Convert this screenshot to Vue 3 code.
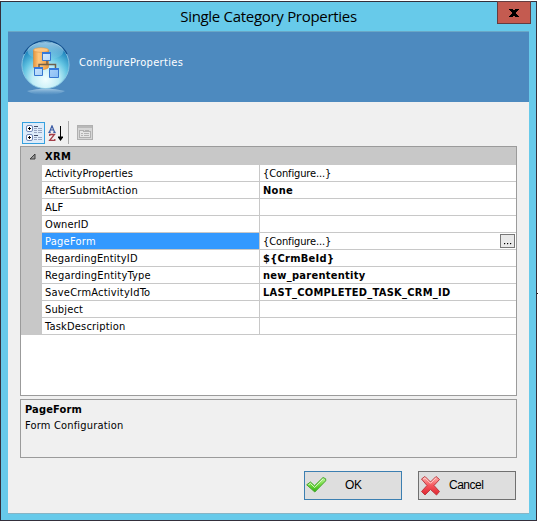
<script setup>
const rows = [
  { name: 'ActivityProperties', value: '{Configure...}', tracking: 0.05 },
  { name: 'AfterSubmitAction', value: 'None', bold: true, tracking: 0.18 },
  { name: 'ALF', value: '', tracking: 0.1 },
  { name: 'OwnerID', value: '', tracking: 0.1 },
  { name: 'PageForm', value: '{Configure...}', selected: true, tracking: 0.25 },
  { name: 'RegardingEntityID', value: '${CrmBeId}', bold: true, tracking: 0.18 },
  { name: 'RegardingEntityType', value: 'new_parententity', bold: true, tracking: 0.22 },
  { name: 'SaveCrmActivityIdTo', value: 'LAST_COMPLETED_TASK_CRM_ID', bold: true, tracking: 0.22 },
  { name: 'Subject', value: '', tracking: 0.15 },
  { name: 'TaskDescription', value: '', tracking: 0.2 }
]
</script>

<template>
  <div class="desktop">
    <div class="window">
      <div class="titlebar">
        <span class="title">Single Category Properties</span>
        <button class="close" aria-label="Close">
          <svg width="10" height="8" viewBox="0 0 10 8" shape-rendering="crispEdges">
            <path d="M0 0h4v1h2V0h4v1H9v1H8v1H7v2h1v1h1v1h1v1H6V7H4v1H0V7h1V6h1V5h1V3H2V2H1V1H0z" fill="#000" />
          </svg>
        </button>
      </div>
      <div class="client">
        <header class="banner">
          <svg class="orb" width="52" height="58" viewBox="0 0 52 58">
            <defs>
              <radialGradient id="ball" cx="50%" cy="80%" r="80%">
                <stop offset="0" stop-color="#f2feff" />
                <stop offset=".35" stop-color="#c0edf6" />
                <stop offset=".6" stop-color="#62c4e2" />
                <stop offset=".85" stop-color="#2389c0" />
                <stop offset="1" stop-color="#125b9b" />
              </radialGradient>
              <linearGradient id="gloss" x2="0" y2="1">
                <stop offset="0" stop-color="#b9def3" stop-opacity=".8" />
                <stop offset="1" stop-color="#8fd1ee" stop-opacity=".15" />
              </linearGradient>
              <linearGradient id="drum">
                <stop offset="0" stop-color="#e8953c" />
                <stop offset=".35" stop-color="#ffc980" />
                <stop offset="1" stop-color="#ed983d" />
              </linearGradient>
              <linearGradient id="pane" x2="1" y2="1">
                <stop offset="0" stop-color="#e4f3ff" />
                <stop offset="1" stop-color="#87bdf5" />
              </linearGradient>
              <linearGradient id="shine" x2="0" y2="1">
                <stop offset="0" stop-color="#c6e0f0" stop-opacity=".75" />
                <stop offset="1" stop-color="#8fc0e0" stop-opacity="0" />
              </linearGradient>
            </defs>
            <path d="M7 51Q26 46 45 51Q39 55 26 55Q13 55 7 51z" fill="url(#shine)" />
            <circle cx="25.500" cy="25" r="23.600" fill="url(#ball)" stroke="#8cc7e2" stroke-width=".9" />
            <path d="M4 14A24 24 0 0 1 47 14" fill="none" stroke="#114f8e" stroke-width="1.300" />
            <ellipse cx="25.500" cy="11" rx="18" ry="9" fill="url(#gloss)" />
            <path d="M13.500 10v17c0 3.500 15 3.500 15 0V10z" fill="url(#drum)" stroke="#d98835" stroke-width=".6" />
            <ellipse cx="21" cy="10" rx="7.500" ry="2.300" fill="#ffc680" stroke="#dc9749" stroke-width=".6" />
            <path d="M27 21v3.500M19 28v-3.500H35.500V29" fill="none" stroke="#715f4b" stroke-width="1.500" />
            <path d="M22.500 12.500h8v8h-8zM14.500 27.500h8v8h-8zM29.500 28.500h9v9h-9z" fill="url(#pane)" stroke="#3677d0" />
            <path d="M22 13h9M14 28h9M29 29h10" stroke="#3478dc" stroke-width="2" />
          </svg>
          <span class="banner-text">ConfigureProperties</span>
        </header>
        <main class="body">
          <div class="toolbar">
            <button class="tool active" aria-label="Categorized">
              <svg width="18" height="18" viewBox="0 0 18 18">
                <g fill="#fff" stroke="#7088b8">
                  <rect x="1.500" y="1.500" width="6" height="6" rx="1.500" />
                  <rect x="1.500" y="10.500" width="6" height="6" rx="1.500" />
                </g>
                <g shape-rendering="crispEdges">
                  <path d="M3 4.500h3M4.500 3v3M3 13.500h3M4.500 12v3" stroke="#000" />
                  <path d="M9 2.500h4M9 11.500h4" stroke="#444e68" />
                  <path d="M9 4.500h3M13 4.500h4M9 6.500h3M13 6.500h4M9 8.500h3M13 8.500h4M9 13.500h3M13 13.500h4M9 15.500h3M13 15.500h4" stroke="#98a5c2" />
                </g>
              </svg>
            </button>
            <button class="tool sort" aria-label="Alphabetical">
              <svg width="16" height="17" viewBox="0 0 16 17">
                <path d="M1.500 7L4 .8 6.500 7M2.500 5h3M.3 7.300h2.400M5.300 7.300h2.400" fill="none" stroke="#3c5ca5" stroke-width="1.200" />
                <path d="M1.700 11V9.500h4.800L1.700 15.400h5.100V14" fill="none" stroke="#a33d48" stroke-width="1.300" />
                <path d="M12.500 1v12" stroke="#000" />
                <path d="M10 11.500h5v1L12.500 16 10 12.500z" fill="#000" />
              </svg>
            </button>
            <span class="separator"></span>
            <button class="tool pages" aria-label="Property Pages">
              <svg width="16" height="15" viewBox="0 0 16 15" shape-rendering="crispEdges">
                <rect x=".5" y=".5" width="15" height="14" fill="#d6d6d6" stroke="#b0b0b0" />
                <path d="M1 2h14" stroke="#b9b9b9" stroke-width="2" />
                <path d="M2.500 12.500v-7h4v1h7v6z" fill="#e5e5e5" stroke="#b0b0b0" />
                <path d="M8 5.500h4" stroke="#b0b0b0" />
                <path d="M4 8.500h2M7 8.500h5M4 10.500h2M7 10.500h5" stroke="#b3b3b3" />
              </svg>
            </button>
          </div>
          <section class="grid">
            <div class="category">
              <svg width="7" height="7" viewBox="0 0 7 7"><path d="M6 1v5H1z" fill="#999" stroke="#333" stroke-width=".9" /></svg>
              <span>XRM</span>
            </div>
            <div v-for="row in rows" :key="row.name" class="row" :class="{ selected: row.selected }">
              <div class="name" :style="{ letterSpacing: row.tracking + 'px' }">{{ row.name }}</div>
              <div class="value" :class="{ bold: row.bold }">
                <span>{{ row.value }}</span>
                <button v-if="row.selected" class="more" aria-label="Edit">
                  <svg width="9" height="8" viewBox="0 0 9 8" shape-rendering="crispEdges"><path d="M1 6h1v1H1zM4 6h1v1H4zM7 6h1v1H7z" fill="#000" stroke="#000" stroke-width=".2" /></svg>
                </button>
              </div>
            </div>
          </section>
          <section class="help">
            <div class="help-title">PageForm</div>
            <div class="help-text">Form Configuration</div>
          </section>
          <footer class="actions">
            <button class="action primary">
              <svg width="22" height="20" viewBox="0 0 22 20">
                <defs><linearGradient id="tick" x2="0" y2="1"><stop offset="0" stop-color="#c4f5a5" /><stop offset=".5" stop-color="#70db3b" /><stop offset="1" stop-color="#2fae12" /></linearGradient></defs>
                <path d="M.7 8.800L4.500 6l4 3.800L17 1.500l2.700 1.300v2L8.800 16z" fill="url(#tick)" stroke="#47a52d" stroke-linejoin="round" />
                <path d="M2.500 8.700l2-1.200 4.200 4L17 3" fill="none" stroke="#dbf9c9" />
              </svg>
              <span>OK</span>
            </button>
            <button class="action">
              <svg width="22" height="22" viewBox="0 0 22 22">
                <defs><linearGradient id="cross" x2="0" y2="1"><stop offset="0" stop-color="#ffb4ae" /><stop offset=".5" stop-color="#f5545b" /><stop offset="1" stop-color="#df242f" /></linearGradient></defs>
                <path d="M1.500 4L5 1.500 10.500 7 16 1.500 19.500 4.500 14 10.500l5.500 6-3 3.500-6-5.500L5 20l-3.500-3.500 5.500-6z" fill="url(#cross)" stroke="#bd3940" stroke-linejoin="round" />
                <path d="M3 4.200L5 2.800l5.500 5.500L16 2.800" fill="none" stroke="#ffd4cf" />
              </svg>
              <span>Cancel</span>
            </button>
          </footer>
        </main>
      </div>
    </div>
    <span class="edge-mark"></span>
  </div>
</template>

<style>
body { margin: 0; background: #fff; overflow: hidden; }
</style>

<style scoped>
* { box-sizing: border-box; }
.desktop {
  width: 538px; height: 522px; padding-top: 1px; display: flex; background: #fff;
  font-family: "DejaVu Sans Condensed", "DejaVu Sans", sans-serif; font-stretch: condensed;
  font-size: 11px; color: #000;
}
button { font: inherit; color: inherit; margin: 0; padding: 0; border-radius: 0; }
svg { display: block; flex: none; }
.window { width: 537px; height: 520px; border: 1px solid #342f3b; background: #67caea; padding: 0 7px; flex: none; }
.titlebar { height: 29px; position: relative; display: flex; justify-content: center; align-items: center; }
.title { font: 15px/29px "Open Sans", sans-serif; letter-spacing: -.3px; white-space: nowrap; }
.close {
  position: absolute; top: -1px; right: -2px; width: 34px; height: 23px;
  display: flex; align-items: center; justify-content: center;
  background: #c45b50; border: 1px solid #643c40;
}
.client { height: 483px; width: 521px; background: #f0f0f0; border-top: 1px solid #6aa7c6; border-bottom: 1px solid #86b5c6; }
.banner { height: 70px; background: #4d8abf; display: flex; padding: 8px 0 0 12px; }
.banner-text { color: #fff; font-size: 11px; line-height: 14px; margin: 16px 0 0 7px; letter-spacing: .33px; }
.body { padding: 20px 12px 0; }
.toolbar { display: flex; height: 24px; padding-left: 2px; }
.tool { background: transparent; border: 0; display: flex; align-items: center; justify-content: center; }
.active { width: 23px; height: 22px; background: #ddecfa; border: 1px solid #35a0df; }
.sort { width: 20px; height: 22px; padding-left: 2px; }
.separator { width: 1px; height: 23px; margin-top: -1px; margin-left: 3px; background: #aaa; }
.pages { margin-left: 8px; width: 16px; height: 20px; }
.grid { height: 250px; width: 497px; border: 1px solid #9b9b9b; background: #fff; }
.category { height: 18px; background: #c8c8c8; display: flex; align-items: center; padding-left: 8px; gap: 9px; font-weight: bold; }
.category span { letter-spacing: .35px; }
.row { height: 17px; display: flex; border-left: 21px solid #c8c8c8; white-space: nowrap; }
.name { width: 218px; padding: 1px 0 0 3px; line-height: 15px; border-right: 1px solid #c8c8c8; border-bottom: 1px solid #c8c8c8; }
.value { flex: 1; padding: 0 1px 0 3px; line-height: 15px; letter-spacing: -.12px; border-bottom: 1px solid #c8c8c8; display: flex; justify-content: space-between; align-items: center; }
.value span { padding-top: 1px; }
.bold { font-weight: bold; letter-spacing: .28px; }
.selected .name { background: #3399ff; color: #fff; }
.more { width: 15px; height: 14px; border: 1px solid #777; background: #e9e9e9; display: flex; align-items: center; justify-content: center; }
.help { margin-top: 3px; height: 59px; width: 497px; border: 1px solid #9b9b9b; padding: 2px 4px; }
.help-title { font-weight: bold; line-height: 16px; letter-spacing: .15px; }
.help-text { line-height: 16px; letter-spacing: .18px; }
.actions { display: flex; justify-content: flex-end; gap: 16px; margin: 13px 1px 0 0; }
.action {
  width: 98px; height: 29px; border: 1px solid #707070; background: #dedede;
  display: flex; align-items: center; padding-left: 2px; font-family: "Liberation Sans", sans-serif; font-size: 12px;
}
.action span { margin: -2px 0 0 6px; letter-spacing: -.5px; }
.action svg { margin-left: -1px; }
.action span { margin-left: 7px; }
.action.primary { border-color: #3c7fb1; }
.action.primary span { margin-left: 17px; letter-spacing: -.3px; }
.edge-mark { width: 1px; height: 1px; margin-top: 292px; background: #222; }
</style>
